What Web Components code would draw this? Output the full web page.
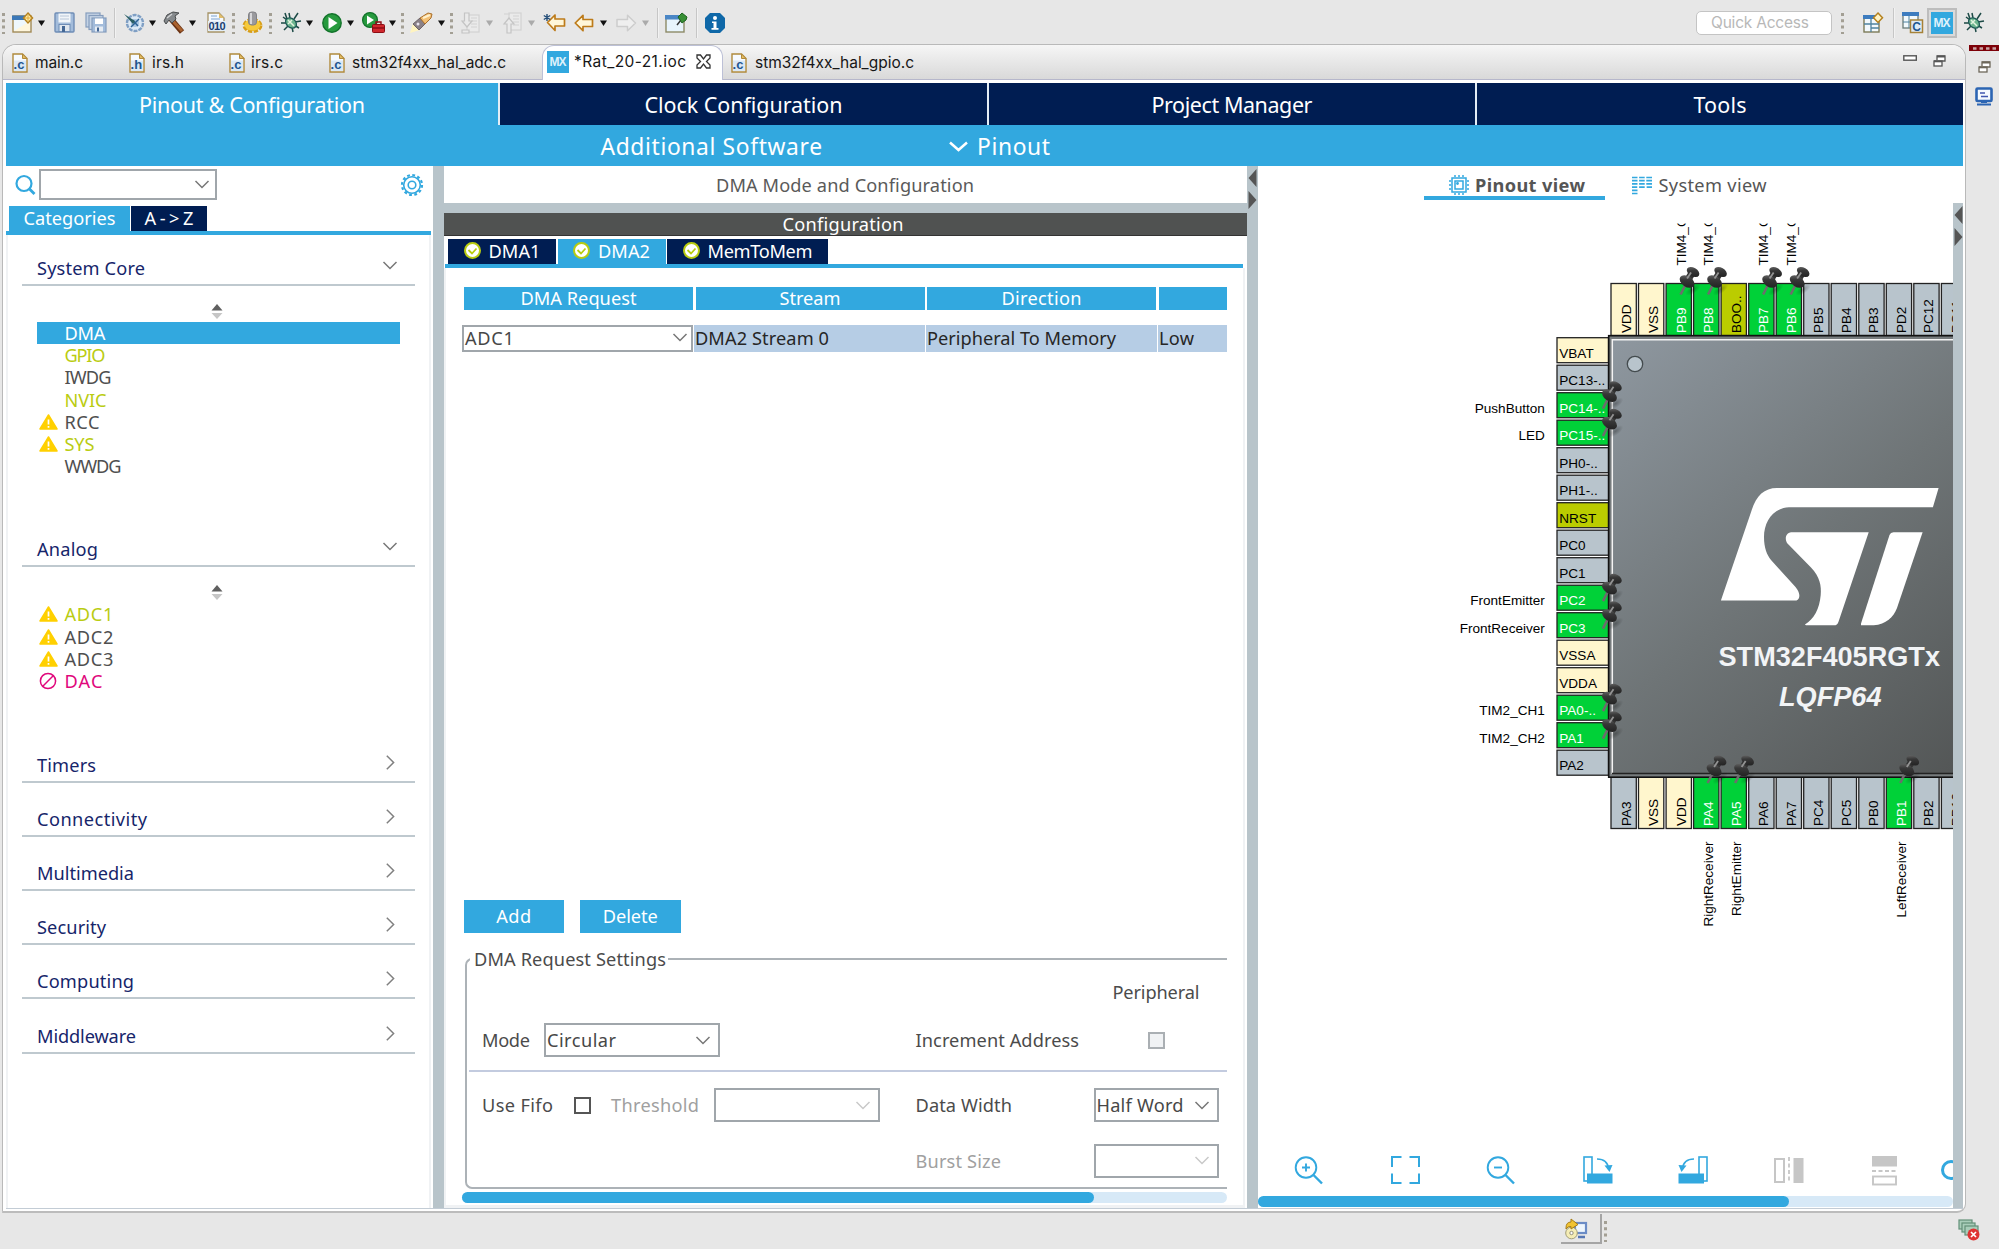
<!DOCTYPE html>
<html lang="en"><head><meta charset="utf-8"><title>Rat_20-21.ioc</title>
<style>html,body{margin:0;width:1999px;height:1249px;overflow:hidden;background:#e7e7e7}</style></head>
<body><cube-workbench></cube-workbench>
<script>
const BASE='*{box-sizing:border-box}.row{display:flex;align-items:center;flex:none}.c{flex:none;display:flex;align-items:center}svg{display:block;overflow:visible}';
const define=(name,css,render)=>customElements.define(name,class extends HTMLElement{
  connectedCallback(){ if(this.shadowRoot) return; const r=this.attachShadow({mode:'open'});
    r.innerHTML='<style>'+BASE+css+'</style>'+(typeof render==='function'?render(this):render);
    if(this.tagName==='FIT-TEXT') fit(this,r); }});
// Spreads letter spacing so a label fills its design width.
function fit(el,r){ const s=r.querySelector('span'), w=+el.getAttribute('w')+1, n=el.textContent.length;
  const nat=s.getBoundingClientRect().width; s.style.letterSpacing=((w-nat)/Math.max(1,n-1)).toFixed(3)+'px'; el.style.width=w+'px'; }
// Turns start/width pairs into a flex run with margins between the cells.
const run=(items,p=0)=>items.map(([x,w,h])=>{const m=x-p;p=x+w;return `<div class="c" style="margin-left:${m.toFixed(2)}px;width:${w}px">${h}</div>`}).join('');
const T=(a,b,t,st='')=>[a,b-a,`<fit-text w="${b-a}" style="${st}">${t}</fit-text>`];
const I=(x,w,n)=>[x,w,`<ui-icon name="${n}"></ui-icon>`];

define('fit-text',':host{display:block;flex:none;white-space:nowrap}span{display:inline-block}','<span><slot></slot></span>');

const doc=(l)=>`<svg width="16" height="20" viewBox="0 0 16 20"><path d="M1 1H10.500L15 5.500V19H1Z" fill="#f6faff" stroke="#b08a3c" stroke-width="1.400"/><path d="M10.500 1V5.500H15Z" fill="#e5bd62" stroke="#b08a3c"/><rect x="2" y="7.500" width="12" height="10.500" fill="#dbe8f5"/><text x="1.600" y="16" font-family="Liberation Sans" font-weight="700" font-size="13" fill="#1f568f">.${l}</text></svg>`;
const bug='<svg width="22" height="21" viewBox="0 0 22 21"><g stroke="#1c4a46" stroke-width="1.500" fill="none"><path d="M7 8 3 5M7 11H1M8 14 4 18M10 6 9 1M14 7 18 1M15 10 21 9M14 13 19 16M12 15 13 20M7 7 5 1"/></g><ellipse cx="11" cy="11" rx="6" ry="4.500" transform="rotate(40 11 11)" fill="#6db58f" stroke="#1d5a56" stroke-width="1.300"/><path d="M8 8 14 14M8 12l4-4" stroke="#e4f3df" stroke-width="1.500"/></svg>';
const mx='<svg width="22" height="22"><rect width="22" height="22" fill="#32a8df"/><text x="11" y="15.300" font-family="Liberation Sans" font-size="12" font-weight="700" fill="#dff2fb" text-anchor="middle" textLength="17">MX</text></svg>';
const rest=(c)=>`<svg width="13" height="12" viewBox="0 0 13 12"><path d="M4 5V1H12V6H9" fill="#fff" stroke="${c}" stroke-width="1.300"/><path d="M4 1.500H12" stroke="${c}" stroke-width="2"/><rect x="1" y="6" width="8" height="5" fill="#fff" stroke="${c}" stroke-width="1.300"/><path d="M1 6.300H9" stroke="${c}" stroke-width="2"/></svg>`;
const lens=(s)=>`<svg width="28" height="28" fill="none" stroke="#32a8df" stroke-width="1.900"><circle cx="11" cy="11.500" r="10.300"/><path d="M18.500 19 27 27.500" stroke-width="2.400"/><path d="${s}"/></svg>`;
const ICON={
tri:'<svg width="7" height="6"><path d="M0 .5H7L3.500 6Z" fill="#111"/></svg>',
trig:'<svg width="7" height="6"><path d="M0 .5H7L3.500 6Z" fill="#aaa"/></svg>',
dots:'<svg width="3" height="22"><path d="M1.500 1V22" stroke="#a39f94" stroke-width="3" stroke-dasharray="3 3.300"/></svg>',
sep:'<svg width="2" height="30"><path d="M.5 0V30" stroke="#c6c6c6"/><path d="M1.500 0V30" stroke="#f2f2f2"/></svg>',
neww:'<svg width="22" height="20"><rect x="1" y="3" width="18" height="16" fill="#eef7fd" stroke="#a38a55" stroke-width="1.400"/><rect x="0" y="2.500" width="16" height="4.500" fill="#3b78b8"/><path d="M2 18 18 8V18Z" fill="#fff6dc"/><path d="M16 0 20.500 5 16 10 11.500 5Z" fill="#fff1b0" stroke="#b4811e" stroke-width="1.500"/><path d="M16 2V8M13 5H19" stroke="#e2a937"/></svg>',
save:'<svg width="21" height="21"><rect x="1" y="1" width="19" height="19" rx="1" fill="#a3bcdb" stroke="#6f8db6" stroke-width="1.400"/><rect x="4.500" y="1.500" width="12" height="9" fill="#f1f5f9"/><path d="M6 4H15M6 7H15" stroke="#b8c6d8"/><rect x="5" y="12.500" width="11" height="7" fill="#dfe6ee" stroke="#6f8db6"/><rect x="8" y="14" width="3" height="6" fill="#446795"/></svg>',
saves:'<svg width="22" height="21"><g fill="#c4d3e5" stroke="#859dbd" stroke-width="1.200"><rect x="1" y="1" width="14" height="14"/><rect x="4" y="3.500" width="14" height="14"/><rect x="7" y="6" width="14" height="14" fill="#a3bcdb"/></g><rect x="10" y="6.500" width="8" height="5.500" fill="#fff"/><rect x="10" y="14.500" width="8" height="5" fill="#e6ecf3"/><rect x="12" y="15.500" width="2" height="4" fill="#446795"/></svg>',
clock:'<svg width="21" height="20"><circle cx="11" cy="10" r="8" fill="#dce9f5" stroke="#7f9fc4" stroke-width="2.400" stroke-dasharray="4 1"/><circle cx="11" cy="10" r="4" fill="#a9c5e2"/><path d="M7 14 15 6M8.500 7l5.500 6" stroke="#2c6394" stroke-width="1.500"/><path d="M0 1 11 8 9 11Z" fill="#2c6064"/></svg>',
hammer:'<svg width="22" height="21"><path d="M8 7 19 20" stroke="#6a3213" stroke-width="5.500"/><path d="M9 8 19 19" stroke="#a9622f" stroke-width="3"/><path d="M1 9 4 3 10 0 16 1 12 4 13 7 9 11 6 8 3 12Z" fill="#85898c" stroke="#494c4d"/><path d="M4 6 9 2" stroke="#d3d5d6" stroke-width="1.500"/></svg>',
bin:'<svg width="19" height="21"><path d="M1 1H12L17 6V20H1Z" fill="#f4f9ff" stroke="#a59265" stroke-width="1.300"/><path d="M12 1V6H17Z" fill="#e1bd6c"/><path d="M4 4H10M4 7H13" stroke="#7ea3cd"/><rect x="1" y="9" width="18" height="10" fill="#e2edf7"/><text x="1.500" y="18" font-family="Liberation Sans" font-weight="700" font-size="11" fill="#203d70" textLength="17">010</text></svg>',
build:'<svg width="21" height="21"><ellipse cx="10.500" cy="13.500" rx="8" ry="5.500" fill="#f2bd27" stroke="#d79d17" stroke-width="4" stroke-dasharray="4 1.400"/><ellipse cx="10.500" cy="13" rx="8" ry="5.500" fill="#f6ca3b"/><rect x="6.500" y="0" width="8" height="13" rx="3" fill="#9a9a9e" stroke="#818185"/><path d="M9 1V12" stroke="#d7d7da" stroke-width="2"/></svg>',
bug,
play:'<svg width="20" height="20"><circle cx="10" cy="10" r="9.200" fill="#279a3e" stroke="#12732a" stroke-width="1.400"/><path d="M6.500 4 15.500 10 6.500 16Z" fill="#fff"/></svg>',
playx:'<svg width="23" height="21"><circle cx="8" cy="8" r="7.400" fill="#279a3e" stroke="#12732a" stroke-width="1.300"/><path d="M5 3.500 12 8 5 12.500Z" fill="#fff"/><rect x="10.500" y="12.500" width="12" height="8" rx="1" fill="#d0282d" stroke="#8d0d14"/><path d="M14 12V10H19V12M10 16H22.500" stroke="#8d0d14" fill="none" stroke-width="1.400"/></svg>',
torch:'<svg width="23" height="22"><path d="M0 21 3 11 10 18Z" fill="#fff4c0"/><path d="M3 12 10 6 15 12 9 18Z" fill="#8a8187" stroke="#6e6468"/><path d="M10 6 18 1 22 2 21 6 15 12Z" fill="#f3bf73" stroke="#a96f2c"/><path d="M13 6 20 3" stroke="#fff0cb" stroke-width="2"/><circle cx="8" cy="12" r="1.500" fill="#e9e4ef"/></svg>',
dl:'<svg width="19" height="22" fill="#eaeaea" stroke="#d2d2d2" stroke-width="1.200"><rect x="6" y="3" width="12" height="17"/><path d="M10 6H16M10 9H16M10 12H16M10 15H16"/><path d="M3.500 1H8V9H11L6 15 1 9H3.500ZM1 18H8V21H1Z" stroke="#c4c4c4"/></svg>',
ul:'<svg width="19" height="22" fill="#eaeaea" stroke="#d2d2d2" stroke-width="1.200"><rect x="6" y="1" width="12" height="17"/><path d="M10 4H16M10 7H16M10 10H16M10 13H16M1 2H7"/><path d="M4 21H8V12H11L6 6 1 12H4Z" stroke="#c4c4c4"/></svg>',
back:'<svg width="20" height="18"><path d="M1.200 9 9 1.300V5.500H18.500V12.500H9V16.700Z" fill="#fff7d9" stroke="#bd7b1a" stroke-width="1.700" stroke-linejoin="round"/></svg>',
backs:'<svg width="23" height="19"><path d="M4.500 9.500 12 2V6H21.500V13H12V17.500Z" fill="#fff7d9" stroke="#bd7b1a" stroke-width="1.700" stroke-linejoin="round"/><path d="M4 1V8M.8 2.500 7.200 6.500M7.200 2.500.8 6.500" stroke="#234d78" stroke-width="1.400"/></svg>',
fwd:'<svg width="21" height="18"><path d="M19.500 9 11.500 1.300V5.500H1V12.500H11.500V16.700Z" fill="#efefef" stroke="#cdcdcd" stroke-width="1.500" stroke-linejoin="round"/></svg>',
pinw:'<svg width="23" height="20"><rect x="1" y="3" width="18" height="16" fill="#e8f4fc" stroke="#8d8a67" stroke-width="1.400"/><rect x="0" y="2" width="16" height="4.500" fill="#4a86c6"/><path d="M12 12 16 7" stroke="#333" stroke-width="1.500"/><path d="M13 4 17 0 22 4 21 7 17 10Z" fill="#388f35" stroke="#1c641f"/></svg>',
info:'<svg width="20" height="20"><path d="M5 0H15L20 5V15L15 20H5L0 15V5Z" fill="#0f68a8"/><circle cx="10" cy="5" r="2" fill="#fff"/><path d="M7 8.500H11.500V15H13.500V16.700H6.500V15H8.500V10H7Z" fill="#fff"/></svg>',
persp:'<svg width="20" height="20"><rect x="1" y="3" width="15" height="16" fill="#f2f9fd" stroke="#7c7b58" stroke-width="1.400"/><rect x="0" y="2" width="14" height="4" fill="#3d7cbf"/><path d="M1 11H16M8 6V19M8 15H16" stroke="#4f829f" stroke-width="1.300"/><path d="M15 0 19.500 4.800 15 9.500 10.500 4.800Z" fill="#fff3c5" stroke="#b4811e" stroke-width="1.500"/></svg>',
perc:'<svg width="21" height="21"><rect x="1" y="1" width="15" height="15" fill="#f2f9fd" stroke="#6a7b78" stroke-width="1.300"/><rect x="0" y="0" width="17" height="4" fill="#3d7cbf"/><path d="M1 10H10M7 4V16" stroke="#4f829f"/><rect x="8.500" y="8" width="12" height="12.500" fill="#dce9f6" stroke="#a68238" stroke-width="1.500"/><text x="14.500" y="18.700" text-anchor="middle" font-family="Liberation Sans" font-weight="700" font-size="12" fill="#1f568f">C</text></svg>',
mx, cfile:doc('c'), hfile:doc('h'),
x:'<svg width="15" height="15"><path d="M1 1H4.500L7.500 5 10.500 1H14V4L10.500 7.500 14 11V14H10.500L7.500 10 4.500 14H1V11L4.500 7.500 1 4Z" fill="#fff" stroke="#333" stroke-width="1.300"/></svg>',
min:'<svg width="14" height="6"><rect x=".8" y=".8" width="12.500" height="4.400" fill="#fff" stroke="#555" stroke-width="1.400"/></svg>',
rest:rest('#555'), restb:rest('#6d675a'),
mon:'<svg width="18" height="19"><rect x="1.500" y="1.500" width="15" height="12.500" rx="1" fill="#f5faff" stroke="#2c65b3" stroke-width="2.600"/><path d="M5 6H10M6 9.500H13" stroke="#4158b0" stroke-width="1.400"/><path d="M6 15H12M2 17.500H16" stroke="#2c65b3" stroke-width="2"/></svg>',
search:'<svg width="20" height="20" fill="none" stroke="#32a8df"><circle cx="9" cy="8.500" r="7.500" stroke-width="2.200"/><path d="M14 13.500 19.500 19" stroke-width="2.800"/></svg>',
gear:'<svg width="24" height="24" viewBox="-12 -12 24 24" fill="none" stroke="#32a8df"><circle r="8.300" stroke-width="1.600"/><circle r="10" stroke-width="2.200" stroke-dasharray="2.800 2.436"/><circle r="3.800" stroke-width="1.600"/></svg>',
down:'<svg width="14" height="9"><path d="M.5 1 7 7.500 13.500 1" fill="none" stroke="#777" stroke-width="1.500"/></svg>',
downl:'<svg width="14" height="9"><path d="M.5 1 7 7.500 13.500 1" fill="none" stroke="#c9c9c9" stroke-width="1.500"/></svg>',
downw:'<svg width="19" height="11"><path d="M1 1.500 9.500 9 18 1.500" fill="none" stroke="#fff" stroke-width="2.500"/></svg>',
right:'<svg width="9" height="15"><path d="M.8.8 7.600 7.500.8 14.200" fill="none" stroke="#808080" stroke-width="1.500"/></svg>',
spin:'<svg width="12" height="15"><path d="M.5 6.500 6 0 11.500 6.500Z" fill="#606060"/><path d="M.5 9H11.500L6 15Z" fill="#c6c6c6"/></svg>',
warn:'<svg width="19" height="16"><path d="M9.500 1 18 15H1Z" fill="#ffd000" stroke="#ffd000" stroke-width="1.500" stroke-linejoin="round"/><path d="M9.500 5.500V10.500M9.500 12V13.700" stroke="#fff" stroke-width="1.700"/></svg>',
no:'<svg width="18" height="18"><circle cx="9" cy="9" r="7.600" fill="none" stroke="#e0087c" stroke-width="1.500"/><path d="M3.800 14.200 14.200 3.800" stroke="#e0087c" stroke-width="1.500"/></svg>',
ok:'<svg width="17" height="17"><circle cx="8.500" cy="8.500" r="7.500" fill="#fff" stroke="#b8cc10" stroke-width="2"/><path d="M4.500 8 8 11.500 12.500 6.500" fill="none" stroke="#b8cc10" stroke-width="1.800"/></svg>',
chip:'<svg width="20" height="20" fill="none" stroke="#32a8df" stroke-width="1.500"><rect x="3" y="3" width="14" height="14"/><rect x="6" y="6" width="8" height="8"/><path d="M5 1H16M5 19H16M1 5V16M19 5V16" stroke-dasharray="2 2"/><circle cx="8.500" cy="8.500" r=".7"/></svg>',
sys:'<svg width="20" height="19" stroke="#32a8df" stroke-width="1.700"><path d="M0 1.500H20M0 4.700H20M0 7.900H20M0 11.100H5.500M14.500 11.100H20M7 11.100H13M0 14.300H5.500M0 17.500H5.500" /><path d="M6.300 0V13M13.500 0V13" stroke="#fff" stroke-width="1.600"/></svg>',
zin:lens('M7 11.500H15M11 7.500V15.500'), zout:lens('M7 11.500H15'),
full:'<svg width="29" height="28" fill="none" stroke="#32a8df" stroke-width="2"><path d="M1 11V1H10.500M18.500 1H28V11M28 17.500V27H18.500M10.500 27H1V17.500"/></svg>',
rotr:'<svg width="30" height="28"><rect x="1" y="1" width="8" height="24" fill="none" stroke="#32a8df" stroke-width="1.600"/><rect x="4" y="17.500" width="25.500" height="10" fill="#32a8df"/><path d="M14 3C21 3 25 7 25.500 13" fill="none" stroke="#32a8df" stroke-width="1.700"/><path d="M21.500 9.500 29.500 9 26.500 16Z" fill="#32a8df"/></svg>',
flh:'<svg width="30" height="26"><rect x="1" y="2" width="9" height="23" fill="none" stroke="#c6c6c6" stroke-width="2"/><path d="M15 0V26" stroke="#c6c6c6" stroke-width="1.800" stroke-dasharray="4 2.500"/><rect x="19.500" y="1" width="10" height="25" fill="#c6c6c6"/></svg>',
flv:'<svg width="25" height="29"><rect width="25" height="10.500" fill="#c6c6c6"/><path d="M0 15H25" stroke="#c6c6c6" stroke-width="1.800" stroke-dasharray="4 2.500"/><rect x="1" y="20.500" width="23" height="8" fill="none" stroke="#c6c6c6" stroke-width="1.900"/></svg>',
part:'<svg width="12" height="20" style="overflow:hidden"><circle cx="10" cy="10" r="8.500" fill="none" stroke="#32a8df" stroke-width="3"/></svg>',
tray:'<svg width="23" height="21"><rect x="10" y="4" width="11" height="10" fill="#eef6fd" stroke="#6b8cc6" stroke-width="2.200"/><path d="M13 18H20" stroke="#5677b3" stroke-width="2.500"/><circle cx="6.500" cy="14" r="5.800" fill="#f5edb5" stroke="#a39e76"/><circle cx="6.500" cy="14" r="1.700" fill="#fff" stroke="#93907a"/><path d="M1 9Q1 3 6 3V0L13 5.500 6 10V7.500Q3 7 1 10Z" fill="#f1c331" stroke="#a57c16"/></svg>',
err:'<svg width="22" height="22"><g fill="#a8cdb9" stroke="#639078" stroke-width="1.200"><rect x="1" y="1" width="13" height="9"/><rect x="4" y="4" width="13" height="9"/><rect x="7" y="7" width="13" height="9"/></g><circle cx="15.500" cy="15.500" r="6" fill="#df3434"/><path d="M13 13 18 18M18 13 13 18" stroke="#fff" stroke-width="1.700"/></svg>'
};
ICON.rotl='<svg width="30" height="28"><g transform="translate(30 0) scale(-1 1)">'+ICON.rotr.replace(/<\/?svg[^>]*>/g,'')+'</g></svg>';
define('ui-icon',':host{display:block;flex:none}',e=>ICON[e.getAttribute('name')]);

define('select-box',':host{display:flex;flex:none;height:100%;border:2px solid #a0a6ab;background:#fff;align-items:center;justify-content:space-between;padding:0 8px 0 1px;color:#474747}',e=>`<slot></slot><span></span><ui-icon name="${e.hasAttribute('off')?'downl':'down'}"></ui-icon>`);

define('main-toolbar',':host{display:flex;height:44px;align-items:center;font-family:Inter,sans-serif;flex:none}.c{height:44px;padding-bottom:1px;padding-top:2px}.q{height:24px;width:136px;background:#fff;border:1.500px solid #c4c4c4;border-radius:5px;display:flex;align-items:center;font-size:15.500px;color:#b8b8b8;padding-left:14px}.sel{background:#dadada;border:2px solid #bdbdbd;width:30px;height:30px;padding:2px}',
 ()=>run([I(1.5,3,'dots'),I(12,22,'neww'),I(38,7,'tri'),I(54,21,'save'),I(85,22,'saves'),I(114,2,'sep'),I(124,21,'clock'),I(149,7,'tri'),I(163,22,'hammer'),I(189,7,'tri'),I(207,19,'bin'),I(232,3,'dots'),I(242,21,'build'),I(269,3,'dots'),I(280,22,'bug'),I(306,7,'tri'),I(322,20,'play'),I(347,7,'tri'),I(362,23,'playx'),I(389,7,'tri'),I(401,3,'dots'),I(410,23,'torch'),I(438,7,'tri'),I(450,3,'dots'),I(461,19,'dl'),I(486,7,'trig'),I(503,19,'ul'),I(528,7,'trig'),I(543,23,'backs'),I(574,20,'back'),I(600,7,'tri'),I(616,21,'fwd'),I(642,7,'trig'),I(657,2,'sep'),I(665,23,'pinw'),I(696,2,'sep'),I(705,20,'info'),
 [1696,136,'<div class="q"><fit-text w="97">Quick Access</fit-text></div>'],I(1841,3,'dots'),I(1863,20,'persp'),I(1893,2,'sep'),I(1902,21,'perc'),[1927,30,'<div class="sel"><ui-icon name="mx"></ui-icon></div>'],I(1963,22,'bug')]));

define('editor-tabs',':host{display:flex;flex:none;height:35px;background:linear-gradient(#f6f6f6,#d9d9d9);border-bottom:1px solid #b6b7cb;font-family:Inter,sans-serif;font-size:15.500px;color:#161616;border-radius:13px 13px 0 0}.c{height:35px;padding-top:1px;padding-bottom:1px}.c .c{padding:0}.act{width:181px;height:35px;background:#fff;border:1.500px solid #bcc0d6;border-bottom:0;border-radius:12px 12px 0 0;display:flex;align-items:center;padding:0 0 3px}.m{height:35px;padding-bottom:10px;display:flex;align-items:center}',
 ()=>run([I(12,16,'cfile'),T(35,82,'main.c'),I(129,16,'hfile'),T(152,183,'irs.h'),I(229,16,'cfile'),T(251,282,'irs.c'),I(329,16,'cfile'),T(352,505,'stm32f4xx_hal_adc.c'),
 [542,181,`<div class="act">${run([I(4,22,'mx'),T(31,142,'*Rat_20-21.ioc'),I(153,15,'x')])}</div>`],I(731,16,'cfile'),T(755,913,'stm32f4xx_hal_gpio.c'),
 [1903,14,'<div class="m"><ui-icon name="min"></ui-icon></div>'],[1933,13,'<div class="m" style="padding-bottom:4px"><ui-icon name="rest"></ui-icon></div>']],3));

define('main-nav',':host{display:block;flex:none;height:83px;background:#32a8df;font-size:21.500px;color:#fff}.tabs{display:flex;height:42px}.tabs div{display:flex;align-items:center;justify-content:center;background:#001d52;padding-top:1px;flex:none}.tabs div+div{border-left:2px solid #e3edf5}.tabs .on{background:#32a8df}.sub{height:41px;font-size:22.800px}.sub .c{padding-top:1px}',
 ()=>`<div class="tabs"><div class="on" style="width:492px"><fit-text w="225">Pinout &amp; Configuration</fit-text></div><div style="width:489px"><fit-text w="197">Clock Configuration</fit-text></div><div style="width:488px"><fit-text w="160">Project Manager</fit-text></div><div style="flex:1"><fit-text w="52">Tools</fit-text></div></div><div class="row sub">${run([T(600.5,821,'Additional Software'),I(949,19,'downw'),T(977,1049,'Pinout')],6)}</div>`);

define('category-header',':host{display:flex;flex:none;margin:0 16px;border-bottom:2px solid #bfc9cf;justify-content:space-between;padding:0 18px 4px 15px;align-items:flex-end;color:#16256a;line-height:24px}',e=>`<slot></slot><ui-icon name="${e.hasAttribute('open')?'down':'right'}" style="margin-bottom:${e.hasAttribute('open')?'10.500px':'7px;margin-right:2px'}"></ui-icon>`);
define('peripheral-item',':host{display:flex;flex:none;height:22.200px;margin:0 31px 0 30.500px;align-items:center;color:#4f4f4f;line-height:22px}:host([sel]){background:#32a8df;color:#fff}:host([green]){color:#bacc12}:host([red]){color:#e0087c}i{width:28px;flex:none;padding-left:2.500px;display:block}',
 e=>`<i>${e.hasAttribute('warn')?'<ui-icon name="warn"></ui-icon>':e.hasAttribute('red')?'<ui-icon name="no"></ui-icon>':''}</i><slot></slot>`);

define('category-panel',`:host{display:flex;flex-direction:column;width:427px;flex:none;background:#fff;font-size:18.200px}
.search{height:40px;align-items:flex-start}.search .c{height:37px}.tabs{height:25px;display:flex;color:#fff;padding-left:3px}.tabs div{display:flex;align-items:center;justify-content:center;background:#001d52;padding-bottom:2px}
.list{flex:1;border-top:4px solid #32a8df;display:flex;flex-direction:column;margin-right:2px;box-shadow:inset 2px 0 #f0f2f4,inset -2px 0 #f0f2f4}
.sp{height:36px;flex:none;display:flex;align-items:center;justify-content:center;padding-top:14px;padding-right:3px}`,
 ()=>`<div class="row search">${run([I(14.5,20,'search'),[39,178,'<select-box style="width:178px;height:31px;padding-right:6px"></select-box>'],I(400,24,'gear')],6)}</div>
 <div class="tabs"><div style="width:121px;background:#32a8df"><fit-text w="91">Categories</fit-text></div><div style="width:76px;margin-left:1px"><fit-text w="48">A-&gt;Z</fit-text></div></div>
 <div class="list"><category-header open style="margin-top:21px"><fit-text w="107">System Core</fit-text></category-header><div class="sp"><ui-icon name="spin"></ui-icon></div>
 ${[['sel',40,'DMA'],['green',40,'GPIO'],['',46,'IWDG'],['green',41,'NVIC'],['warn',34,'RCC'],['warn green',29,'SYS'],['',56,'WWDG']].map(([a,w,t])=>`<peripheral-item ${a}><fit-text w="${w}">${t}</fit-text></peripheral-item>`).join('')}
 <category-header open style="margin-top:60px"><fit-text w="60">Analog</fit-text></category-header><div class="sp"><ui-icon name="spin"></ui-icon></div>
 ${[['warn green',48,'ADC1'],['warn',48,'ADC2'],['warn',48,'ADC3'],['red',37,'DAC']].map(([a,w,t])=>`<peripheral-item ${a}><fit-text w="${w}">${t}</fit-text></peripheral-item>`).join('')}
 ${[[58,'Timers'],[109,'Connectivity'],[96,'Multimedia'],[68,'Security'],[96,'Computing'],[98,'Middleware']].map(([w,t],i)=>`<category-header style="margin-top:${i?24.1:61}px"><fit-text w="${w}">${t}</fit-text></category-header>`).join('')}
 </div>`);

define('split-bar',':host{display:block;flex:none;background:#b8c4ca}',e=>e.hasAttribute('arrows')?'<svg width="10" height="45"><path d="M9.500 3V21L1.500 12ZM1.500 25V43L9.500 34Z" fill="#555"/></svg>':'');
define('scroll-bar',':host{display:block;height:11px;border-radius:6px;background:#d7e9f7;flex:none}div{height:11px;border-radius:6px;background:#32a8df}',e=>`<div style="width:${e.getAttribute('thumb')}px"></div>`);

define('dma-settings',`:host{display:flex;flex-direction:column;flex:none;height:231px;margin:0 18px 0 21px;border:2px solid #acb2b7;border-right:0;border-radius:7px 0 0 7px}
.lg{height:22px;margin:-12px 0 0 3px;background:#fff;width:198px;padding-left:4px;display:flex;align-items:center;flex:none}.sep{height:2px;background:#c3cbdf;margin:13px 0 16px 2px;flex:none}.r{height:34px}.r .c{height:34px}
.ck{width:17px;height:17px;border:2px solid #555}.ck.off{border-color:#aaafb3;background:#f0f2f4}`,
 ()=>`<div class="lg"><fit-text w="191">DMA Request Settings</fit-text></div><div class="row" style="height:43px">${run([T(1113,1199,'Peripheral')],467.5)}</div>
 <div class="row r" style="margin-top:10px">${run([T(482.5,529.5,'Mode'),[544.5,176,'<select-box style="width:176px"><fit-text w="68">Circular</fit-text></select-box>'],T(916,1078.5,'Increment Address'),[1148,17,'<div class="ck off"></div>']],467.5)}</div><div class="sep"></div>
 <div class="row r">${run([T(482.5,552.5,'Use Fifo'),[574.5,17,'<div class="ck"></div>'],T(611.5,698.5,'Threshold','color:#a0a0a0'),[714,166,'<select-box off style="width:166px"></select-box>'],T(916,1011.5,'Data Width'),[1094,125,'<select-box style="width:125px"><fit-text w="86">Half Word</fit-text></select-box>']],467.5)}</div>
 <div class="row r" style="margin-top:21.500px">${run([T(916,1000.5,'Burst Size','color:#a0a0a0'),[1094,125,'<select-box off style="width:125px"></select-box>']],467.5)}</div>`);

define('dma-panel',`:host{display:flex;flex-direction:column;width:803px;flex:none;background:#fff;font-size:18.200px;color:#4b4b4b}
.t{height:37px;padding-left:272px;color:#5a5a5a}.gap{height:10px;background:#b8c4ca;flex:none}.h{height:23px;background:#505251;color:#fff;padding-left:338.500px;border-bottom:1px solid #333}
.tabs{display:flex;height:25px;margin:3px 0 0 4px;color:#fff;flex:none}.tabs div{background:#001d52;display:flex;align-items:center;margin-right:1.500px;padding:0 0 2px 15.500px;gap:8px}
.line{height:4px;background:#32a8df;margin:0 4px 0 1px;flex:none}.body{flex:1;margin-right:2px;box-shadow:inset 2px 0 #f0f2f4,inset -2px 0 #f0f2f4,inset 0 -3px #f0f2f4;display:flex;flex-direction:column}
.th{height:23px;margin:19px 0 0 20px;color:#fff}.th div{height:23px;background:#32a8df;display:flex;align-items:center;justify-content:center;margin-right:2.500px;padding-bottom:1.500px}
.td{height:27px;margin:15px 0 0 18px;color:#262626}.td>div{height:27px;background:#b6cde5;display:flex;align-items:center;margin-left:1px;padding:0 0 2px 1px}
.bt{margin:auto 0 0 19.500px;gap:16px;color:#fff}.bt button{all:unset;width:100.500px;height:33.500px;background:#32a8df;display:flex;align-items:center;justify-content:center}`,
 ()=>`<div class="row t"><fit-text w="257">DMA Mode and Configuration</fit-text></div><div class="gap"></div><div class="row h"><fit-text w="120">Configuration</fit-text></div>
 <div class="tabs"><div style="width:108px"><ui-icon name="ok"></ui-icon><fit-text w="51">DMA1</fit-text></div><div style="width:108px;background:#32a8df"><ui-icon name="ok"></ui-icon><fit-text w="51">DMA2</fit-text></div><div style="width:161px"><ui-icon name="ok"></ui-icon><fit-text w="104">MemToMem</fit-text></div></div><div class="line"></div>
 <div class="body"><div class="row th"><div style="width:229px"><fit-text w="115">DMA Request</fit-text></div><div style="width:229px"><fit-text w="60">Stream</fit-text></div><div style="width:229px"><fit-text w="79">Direction</fit-text></div><div style="width:68px"></div></div>
 <div class="row td"><select-box style="width:231px;padding:0 4px 2px 1px"><fit-text w="48">ADC1</fit-text></select-box><div style="width:231px"><fit-text w="133">DMA2 Stream 0</fit-text></div><div style="width:231px"><fit-text w="188">Peripheral To Memory</fit-text></div><div style="width:69px"><fit-text w="34">Low</fit-text></div></div>
 <div class="row bt"><button><fit-text w="34">Add</fit-text></button><button><fit-text w="54">Delete</fit-text></button></div><dma-settings style="margin-top:25px"></dma-settings><scroll-bar thumb="632" style="margin:3px 18px 5px 18px"></scroll-bar></div>`);

const COL={g:'#00d138',y:'#fff6cd',n:'#b8c4cc',o:'#bbcc00'};
function pinout(){
 let s='',pins='';const P=27.53;
 const tx=(t,x,y,f,rot,anchor='start')=>`<text ${rot?`transform="translate(${x} ${y}) rotate(-90)"`:`x="${x}" y="${y}"`} fill="${f}" text-anchor="${anchor}">${t}</text>`;
 const tack=(x,y)=>{pins+=`<use href="#tack" x="${x}" y="${y}"/>`};
 const box=(x,y,w,h,c)=>`<rect x="${x.toFixed(1)}" y="${y.toFixed(1)}" width="${w}" height="${h}" fill="${COL[c]}" stroke="#222" stroke-width="1.300"/>`;
 'VDD:y VSS:y PB9:g:TIM4_CH4 PB8:g:TIM4_CH3 BOO..:o PB7:g:TIM4_CH2 PB6:g:TIM4_CH1 PB5:n PB4:n PB3:n PD2:n PC12:n PC11:n'.split(' ').forEach((v,i)=>{const[t,c,l]=v.split(':'),x=1611+i*P;
  s+=box(x,283.5,25.3,52,c)+tx(t,x+19.6,333,c==='g'?'#fff':'#000',1); if(l){s+=`<g clip-path="url(#cl)">${tx(l,x+19.6,265.5,'#000',1)}</g>`;tack(x+14,294.5)}});
 'PA3:n VSS:y VDD:y PA4:g:RightReceiver PA5:g:RightEmitter PA6:n PA7:n PC4:n PC5:n PB0:n PB1:g:LeftReceiver PB2:n PB10:n'.split(' ').forEach((v,i)=>{const[t,c,l]=v.split(':'),x=1611+i*P;
  s+=box(x,777,25.3,51.5,c)+tx(t,x+19.6,826,c==='g'?'#fff':'#000',1); if(l){s+=tx(l,x+19.6,841.5,'#000',1,'end');tack(x+13.5,783)}});
 'VBAT:y PC13-..:n PC14-..:g:PushButton PC15-..:g:LED PH0-..:n PH1-..:n NRST:o PC0:n PC1:n PC2:g:FrontEmitter PC3:g:FrontReceiver VSSA:y VDDA:y PA0-..:g:TIM2_CH1 PA1:g:TIM2_CH2 PA2:n'.split(' ').forEach((v,i)=>{const[t,c,l]=v.split(':'),y=337.7+i*27.5;
  s+=box(1557,y,51.5,25,c)+tx(t,1559.3,(y+20).toFixed(1),c==='g'?'#fff':'#000',0); if(l){s+=tx(l,1544.8,(y+20).toFixed(1),'#000',0,'end');tack(1602.5,y+16)}});
 return `<svg width="695" height="921" viewBox="1258 203 695 921" style="overflow:hidden" font-family="Liberation Sans" font-size="13.550"><defs>
 <clipPath id="cl"><rect x="1600" y="223.500" width="360" height="60"/></clipPath>
 <linearGradient id="gr" gradientUnits="userSpaceOnUse" x1="1620" y1="345" x2="1975" y2="760"><stop offset="0" stop-color="#8d969e"/><stop offset=".5" stop-color="#6f7577"/><stop offset="1" stop-color="#535656"/></linearGradient>
 <linearGradient id="pg" x1="0" x2="1" y1="0" y2="1"><stop offset="0" stop-color="#777"/><stop offset=".4" stop-color="#383838"/><stop offset="1" stop-color="#1c1c1c"/></linearGradient>
 <radialGradient id="sh"><stop offset="0" stop-opacity=".28"/><stop offset="1" stop-opacity="0"/></radialGradient>
 <g id="tack"><ellipse cx="13" cy="-5" rx="9" ry="4" transform="rotate(-35 13 -5)" fill="url(#sh)"/><path d="M.5 0 5-9" stroke="#6d6d6d" stroke-width="2.600"/><path d="M6-12 13-23" stroke="#333" stroke-width="7"/><ellipse cx="7" cy="-13" rx="8.200" ry="5.300" transform="rotate(34 7 -13)" fill="url(#pg)"/><ellipse cx="13" cy="-22.500" rx="6.800" ry="4.300" transform="rotate(30 13 -22.500)" fill="url(#pg)"/><path d="M7-16 11-22" stroke="#939393" stroke-width="1.800"/></g></defs>
 ${s}<rect x="1608.700" y="335.700" width="442" height="441.500" fill="#777c7e" stroke="#111" stroke-width="1.600"/><rect x="1612" y="339.500" width="442" height="434" fill="url(#gr)"/><path d="M1612.300 774V339.700H1960" fill="none" stroke="#f4f4f4" stroke-width="1.500"/><path d="M1612 773.600H1960" stroke="#222" stroke-width="1.500"/>
 <circle cx="1635" cy="364" r="7.700" fill="#b8c4cc" stroke="#444b4e" stroke-width="1.300"/>
 <g fill="#fff"><path d="M1938.600 488 1932.900 507.300H1789C1773 508 1764 522 1764 537C1764 548 1767 555 1771 560L1795.500 587C1801 594 1800 599 1796.500 600.500H1720.900L1751.400 511C1756 496 1764 488 1777 488Z"/><path d="M1868.700 532.300H1791C1786 533 1784.500 538 1787 543L1811 567.500C1820 577 1821.500 586 1820.700 595C1819.500 609 1814 619 1804.900 624.500L1806 625.300H1834C1836.500 625.300 1837.500 624.500 1838.500 621.700Z"/><path d="M1922.600 532.300H1893.500Q1890.500 532.300 1889.500 535L1861 623.500V625.300H1873.700C1886 624.500 1893.500 617 1897 608Z"/></g>
 <g font-size="27" font-weight="700" fill="#f2f4f6"><text x="1718.500" y="665.800" textLength="221.500" lengthAdjust="spacingAndGlyphs">STM32F405RGTx</text><text x="1779" y="706" font-style="italic" textLength="102.500" lengthAdjust="spacingAndGlyphs">LQFP64</text></g>${pins}</svg>`;
}
define('pinout-canvas',':host{display:block;flex:none;height:921px}',pinout);
define('pinout-view',`:host{display:flex;flex-direction:column;flex:1;min-width:0;background:#fff;font-size:18.200px;color:#555}.tabs{height:37px;align-items:flex-start}.tabs>.on{width:181px;height:34px;margin-left:166px;border-bottom:4px solid #32a8df;display:flex;align-items:center;font-weight:700;padding:7px 0 0 25px;gap:6px}.o{display:flex;align-items:center;gap:6.500px;margin-left:27px;height:30px;padding-top:8px}
.m{display:flex;flex:1}.col{width:695px;display:flex;flex-direction:column;flex:none;overflow:hidden}.z{height:72px}.z .c{height:72px;padding-top:20px}`,
 ()=>`<div class="row tabs"><div class="on"><ui-icon name="chip"></ui-icon><fit-text w="109">Pinout view</fit-text></div><div class="o"><ui-icon name="sys"></ui-icon><fit-text w="107">System view</fit-text></div></div>
 <div class="m"><div class="col"><pinout-canvas></pinout-canvas><div class="row z">${run([I(1295,28,'zin'),I(1391,29,'full'),I(1487,28,'zout'),I(1583,30,'rotr'),I(1678,30,'rotl'),I(1774,30,'flh'),I(1872,25,'flv'),I(1941,12,'part')],1258)}</div><scroll-bar thumb="531"></scroll-bar></div><split-bar arrows style="width:10px"></split-bar></div>`);

define('side-strip',':host{display:flex;flex-direction:column;align-items:flex-end;width:33px;flex:none;padding-top:1px}.r{height:6px;width:30px;background:#7d0008;flex:none;display:flex;align-items:center;justify-content:center}.r svg{width:23px}ui-icon{align-self:center}',
 '<div class="r"><svg width="23" height="3"><path d="M0 1.500H23" stroke="#c9a3a3" stroke-width="2.500" stroke-dasharray="3.500 3"/></svg></div><ui-icon name="restb" style="margin:10px 0 0 3px"></ui-icon><ui-icon name="mon" style="margin:14px 0 0 3px"></ui-icon>');
define('status-bar',':host{display:flex;height:36px;flex:none}.b{margin:1px 0 0 1561px;width:41px;height:30px;border-right:2px solid #a5a5a5;border-bottom:2px solid #a5a5a5;padding:5px 0 0 4px}',
 '<div class="b"><ui-icon name="tray"></ui-icon></div><ui-icon name="dots" style="margin:7px 0 0 2px"></ui-icon><ui-icon name="err" style="margin:6px 0 0 351px"></ui-icon>');

define('cube-workbench',`:host{display:flex;flex-direction:column;width:1999px;height:1249px;background:#e7e7e7;font-family:"Noto Sans","Open Sans",sans-serif;overflow:hidden}
.mid{display:flex;height:1169px;flex:none}.frame{margin-left:2px;width:1964px;flex:none;border:1px solid #b9b9b9;border-radius:14px 14px 9px 0;background:#fff;display:flex;flex-direction:column;border-bottom:2px solid #bcbcbc}
.content{margin:3px 2px 2px 3px;flex:1;display:flex;flex-direction:column;border-bottom:1px solid #c3ccd5}.cols{display:flex;flex:1;min-height:0}`,
 `<main-toolbar></main-toolbar><div class="mid"><div class="frame"><editor-tabs></editor-tabs><div class="content"><main-nav></main-nav><div class="cols"><category-panel></category-panel><split-bar style="width:11px"></split-bar><dma-panel></dma-panel><split-bar arrows style="width:11px"></split-bar><pinout-view></pinout-view></div></div></div><side-strip></side-strip></div><status-bar></status-bar>`);
</script></body></html>
